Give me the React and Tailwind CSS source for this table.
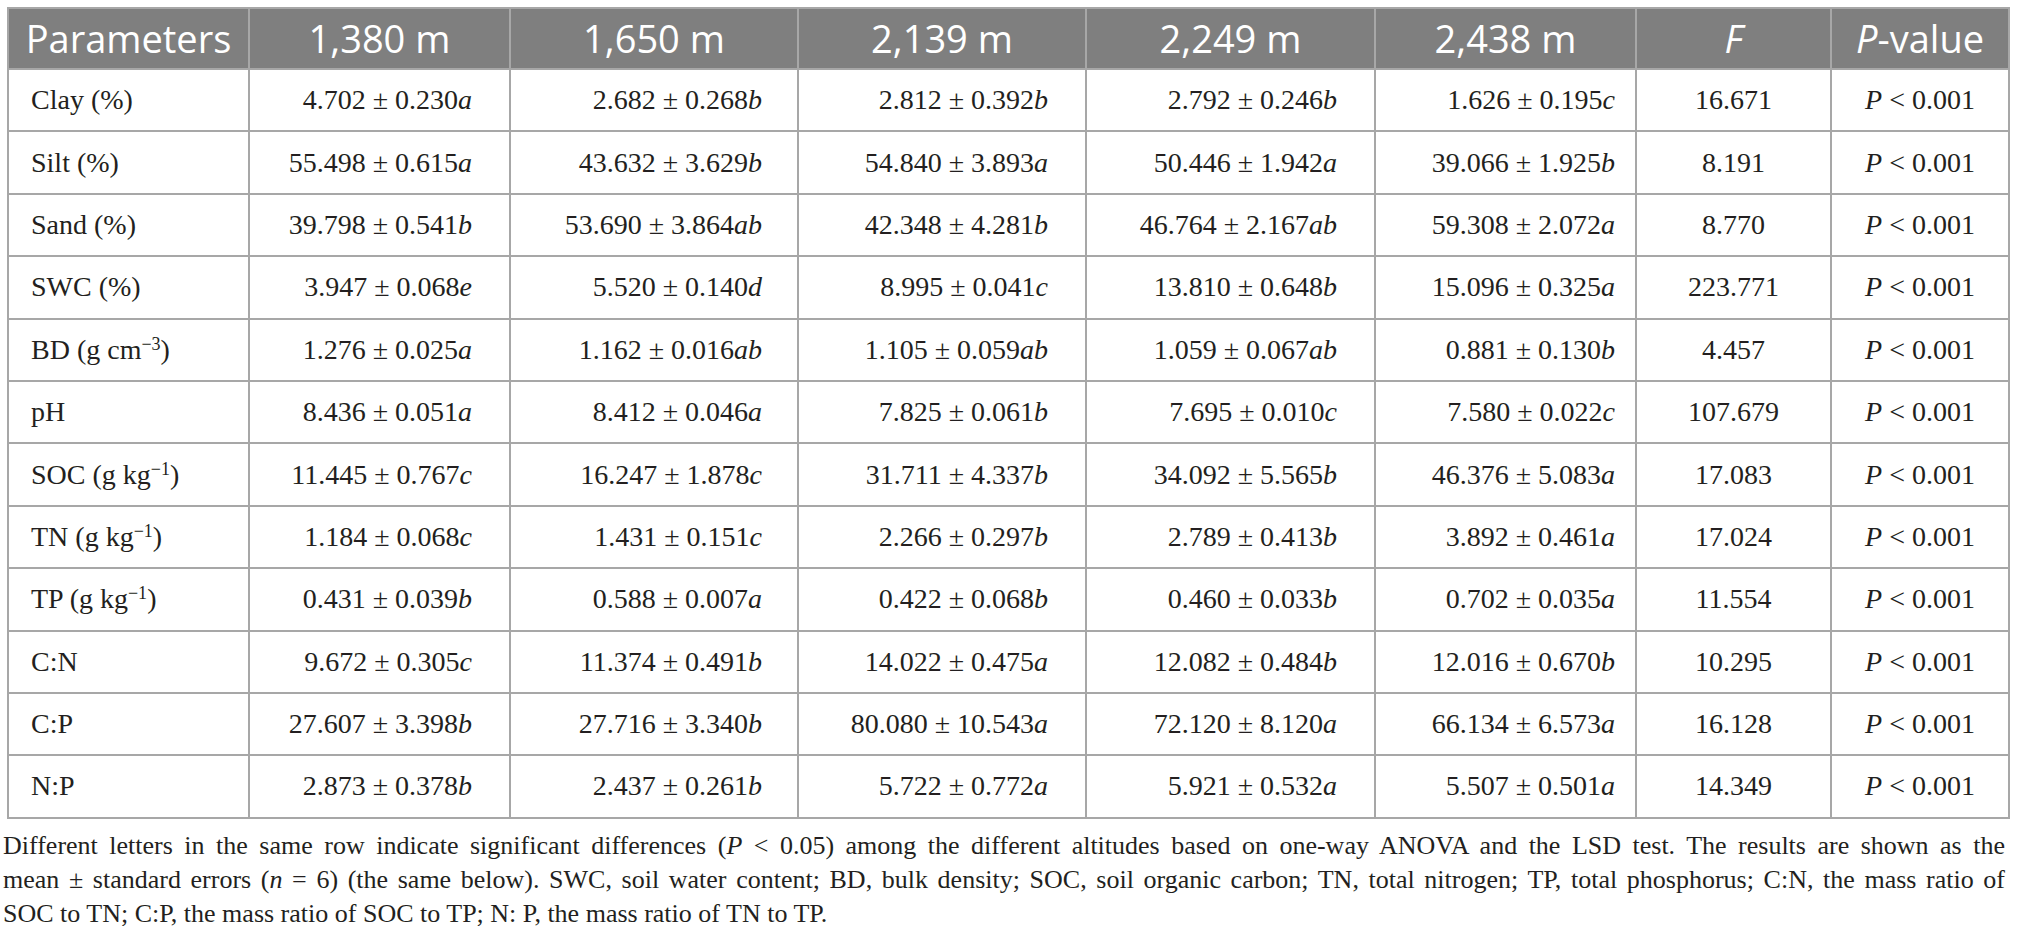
import React from "react";

const headers = ["1,380 m", "1,650 m", "2,139 m", "2,249 m", "2,438 m"];

const rows = [
  { label: "Clay (%)", vals: ["4.702 ± 0.230a", "2.682 ± 0.268b", "2.812 ± 0.392b", "2.792 ± 0.246b", "1.626 ± 0.195c"], f: "16.671" },
  { label: "Silt (%)", vals: ["55.498 ± 0.615a", "43.632 ± 3.629b", "54.840 ± 3.893a", "50.446 ± 1.942a", "39.066 ± 1.925b"], f: "8.191" },
  { label: "Sand (%)", vals: ["39.798 ± 0.541b", "53.690 ± 3.864ab", "42.348 ± 4.281b", "46.764 ± 2.167ab", "59.308 ± 2.072a"], f: "8.770" },
  { label: "SWC (%)", vals: ["3.947 ± 0.068e", "5.520 ± 0.140d", "8.995 ± 0.041c", "13.810 ± 0.648b", "15.096 ± 0.325a"], f: "223.771" },
  { label: "BD (g cm", sup: "−3", vals: ["1.276 ± 0.025a", "1.162 ± 0.016ab", "1.105 ± 0.059ab", "1.059 ± 0.067ab", "0.881 ± 0.130b"], f: "4.457" },
  { label: "pH", vals: ["8.436 ± 0.051a", "8.412 ± 0.046a", "7.825 ± 0.061b", "7.695 ± 0.010c", "7.580 ± 0.022c"], f: "107.679" },
  { label: "SOC (g kg", sup: "−1", vals: ["11.445 ± 0.767c", "16.247 ± 1.878c", "31.711 ± 4.337b", "34.092 ± 5.565b", "46.376 ± 5.083a"], f: "17.083" },
  { label: "TN (g kg", sup: "−1", vals: ["1.184 ± 0.068c", "1.431 ± 0.151c", "2.266 ± 0.297b", "2.789 ± 0.413b", "3.892 ± 0.461a"], f: "17.024" },
  { label: "TP (g kg", sup: "−1", vals: ["0.431 ± 0.039b", "0.588 ± 0.007a", "0.422 ± 0.068b", "0.460 ± 0.033b", "0.702 ± 0.035a"], f: "11.554" },
  { label: "C:N", vals: ["9.672 ± 0.305c", "11.374 ± 0.491b", "14.022 ± 0.475a", "12.082 ± 0.484b", "12.016 ± 0.670b"], f: "10.295" },
  { label: "C:P", vals: ["27.607 ± 3.398b", "27.716 ± 3.340b", "80.080 ± 10.543a", "72.120 ± 8.120a", "66.134 ± 6.573a"], f: "16.128" },
  { label: "N:P", vals: ["2.873 ± 0.378b", "2.437 ± 0.261b", "5.722 ± 0.772a", "5.921 ± 0.532a", "5.507 ± 0.501a"], f: "14.349" },
];

// column widths measured off the reference (separators at 248, 509, 797, 1085, 1374, 1635, 1830)
const colW = ["w-[241px]", "w-[261px]", "w-[288px]", "w-[288px]", "w-[289px]", "w-[261px]", "w-[195px]", "w-[178px]"];
// right padding of the value cells, per altitude column
const padR = ["pr-[37px]", "pr-[35px]", "pr-[37px]", "pr-[37px]", "pr-[20px]"];

const Value = ({ v }) => {
  const m = v.match(/^(.*\d)([a-z]+)$/);
  return (
    <>
      {m[1]}
      <i>{m[2]}</i>
    </>
  );
};

const App = () => {
  return (
    <div className="bg-white w-[2018px] h-[941px] overflow-hidden pt-[7px] font-['Liberation_Serif',serif] text-[#231f20]">
      <table className="ml-[7px] table-fixed border-collapse border-2 border-[#a7a7a7] w-[2001px]">
        <thead>
          <tr className="h-[61px] bg-[#7f7f7f] text-white font-['Open_Sans',sans-serif] text-[38px]">
            <th className={`${colW[0]} border-x-2 border-[#a7a7a7] font-normal`}>Parameters</th>
            {headers.map((h, i) => (
              <th key={h} className={`${colW[i + 1]} border-x-2 border-[#a7a7a7] font-normal`}>
                {h}
              </th>
            ))}
            <th className={`${colW[6]} border-x-2 border-[#a7a7a7] font-normal`}>
              <i>F</i>
            </th>
            <th className={`${colW[7]} border-x-2 border-[#a7a7a7] font-normal`}>
              <i>P</i>-value
            </th>
          </tr>
        </thead>
        <tbody className="text-[28px]">
          {rows.map((r) => (
            <tr key={r.label} className="h-[62.4px]">
              <td className="border-2 border-[#a7a7a7] pl-[22px] text-left whitespace-nowrap">
                {r.label}
                {r.sup && (
                  <>
                    <sup className="text-[18px]">{r.sup}</sup>)
                  </>
                )}
              </td>
              {r.vals.map((v, i) => (
                <td key={i} className={`border-2 border-[#a7a7a7] ${padR[i]} text-right whitespace-nowrap`}>
                  <Value v={v} />
                </td>
              ))}
              <td className="border-2 border-[#a7a7a7] text-center">{r.f}</td>
              <td className="border-2 border-[#a7a7a7] text-center whitespace-nowrap">
                <i>P</i> &lt; 0.001
              </td>
            </tr>
          ))}
        </tbody>
      </table>

      <div className="mt-[10px] pl-[3px] w-[2005px] text-[26px] leading-[34px]">
        <p className="text-justify [text-align-last:justify] whitespace-nowrap">
          Different letters in the same row indicate significant differences (<i>P</i> &lt; 0.05) among the different altitudes based on one-way ANOVA and the LSD test. The results are shown as the
        </p>
        <p className="text-justify [text-align-last:justify] whitespace-nowrap">
          mean ± standard errors (<i>n</i> = 6) (the same below). SWC, soil water content; BD, bulk density; SOC, soil organic carbon; TN, total nitrogen; TP, total phosphorus; C:N, the mass ratio of
        </p>
        <p>SOC to TN; C:P, the mass ratio of SOC to TP; N: P, the mass ratio of TN to TP.</p>
      </div>
    </div>
  );
};

export default App;
